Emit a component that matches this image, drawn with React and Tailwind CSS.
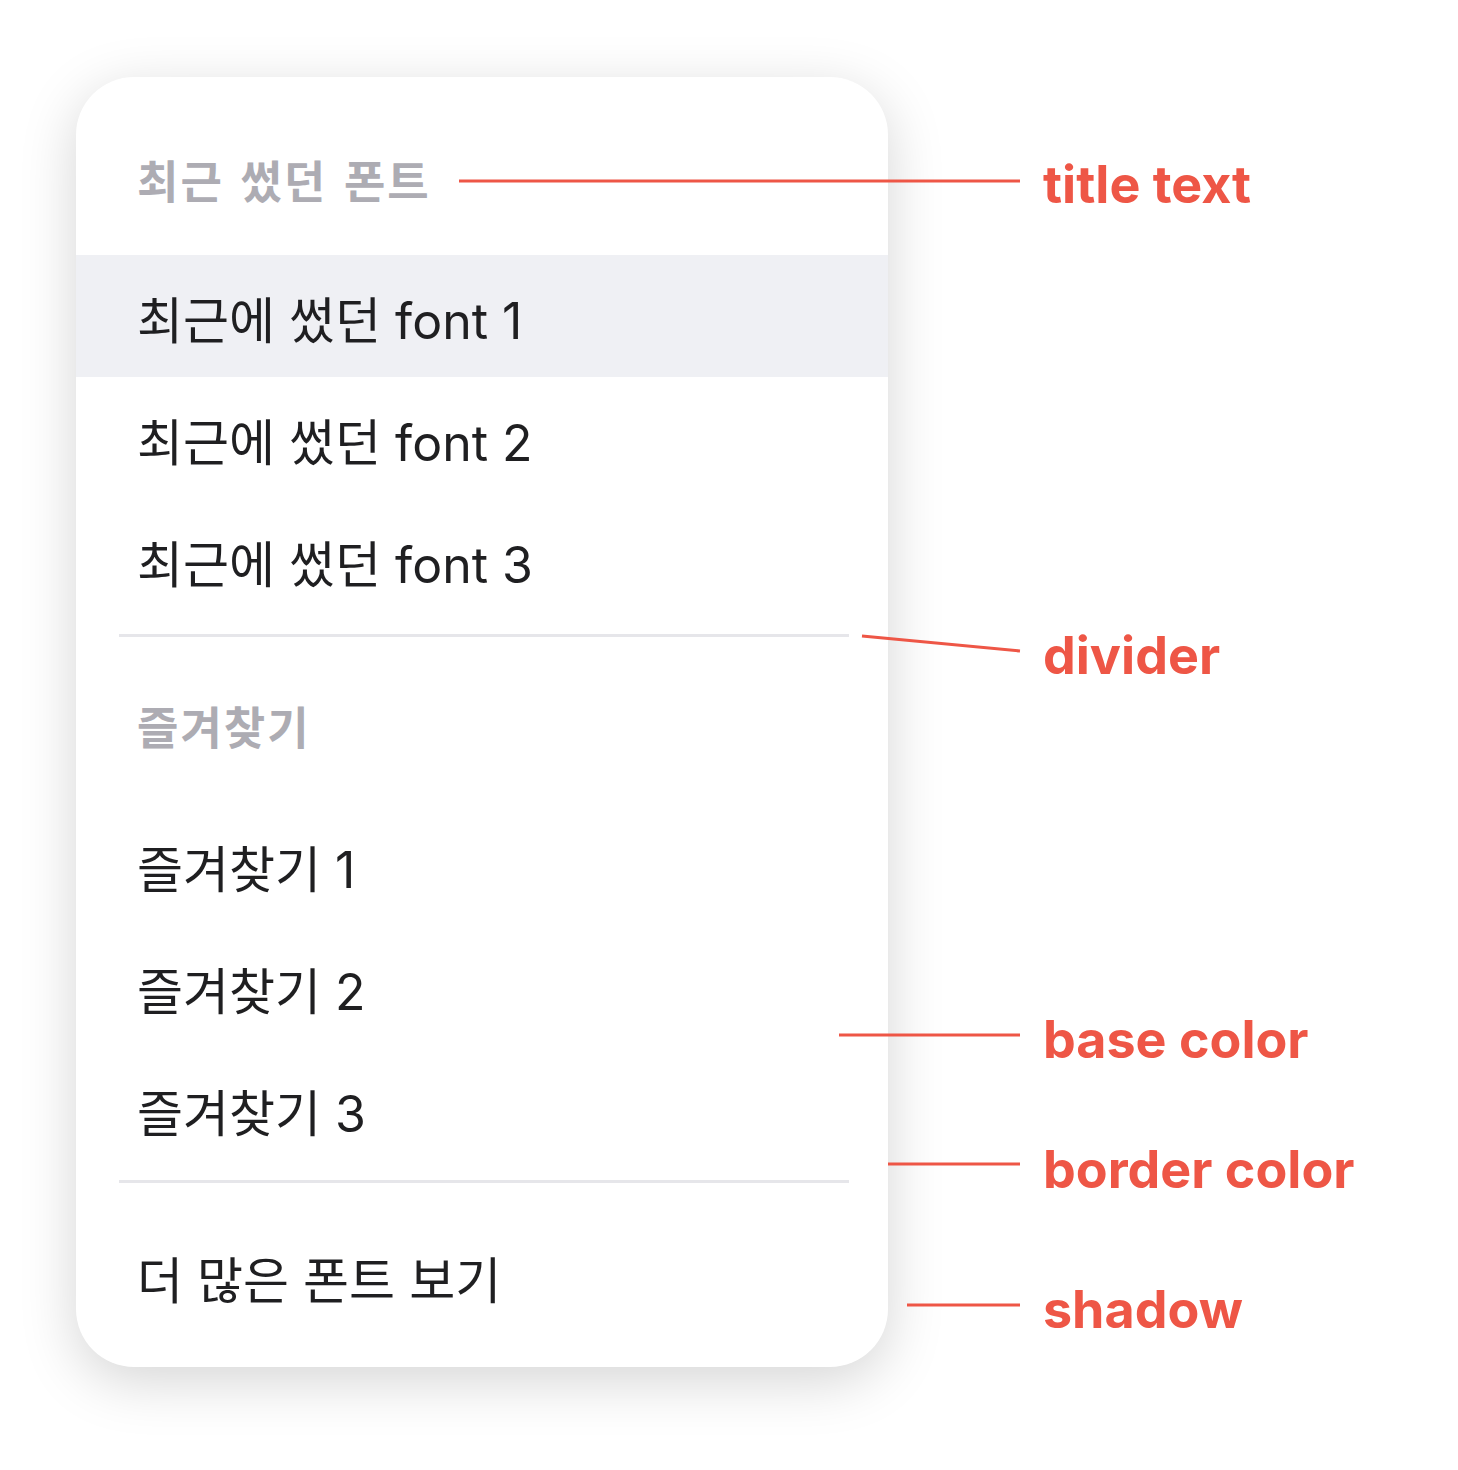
import React from 'react';

const recent = ['최근에 썼던 font 1', '최근에 썼던 font 2', '최근에 썼던 font 3'];
const favorites = ['즐겨찾기 1', '즐겨찾기 2', '즐겨찾기 3'];

const labels = [
  { text: 'title text', top: 'top-[155px]' },
  { text: 'divider', top: 'top-[626px]' },
  { text: 'base color', top: 'top-[1010px]' },
  { text: 'border color', top: 'top-[1140px]' },
  { text: 'shadow', top: 'top-[1280px]' },
];

const Row = ({ label, active }) => (
  <div className={`h-[122px] flex items-center pt-[10px] px-[61px] text-[50px] text-[#1f1f21] ${active ? 'bg-[#eff0f4]' : ''}`}>
    {label}
  </div>
);

const Divider = ({ className }) => (
  <div className={`ml-[43px] mr-[39px] h-[3px] bg-[#e6e6ea] ${className}`} />
);

const App = () => {
  return (
    <div
      className="relative w-[1458px] h-[1470px] bg-white overflow-hidden"
      style={{ fontFamily: '"Inter", "Noto Sans CJK KR", sans-serif' }}
    >
      <div className="pt-[77px] pl-[76px]">
        <div className="w-[812px] h-[1290px] bg-white rounded-[58px] shadow-[0_14px_56px_rgba(0,0,0,0.17)] overflow-hidden">
          <div className="h-[178px] pt-[82px] px-[61px] text-[45px] leading-[48px] font-bold tracking-[2px] [word-spacing:4px] text-[#adacb3]">
            최근 썼던 폰트
          </div>
          {recent.map((r, i) => (
            <Row key={r} label={r} active={i === 0} />
          ))}
          <Divider className="mt-[13px]" />
          <div className="h-[167px] pt-[68px] px-[61px] text-[45px] leading-[48px] font-bold tracking-[2px] text-[#adacb3]">
            즐겨찾기
          </div>
          {favorites.map((f) => (
            <Row key={f} label={f} />
          ))}
          <Divider className="mt-[10px]" />
          <div className="h-[182px] pt-[73px] px-[61px] text-[50px] leading-[50px] text-[#1f1f21]">
            더 많은 폰트 보기
          </div>
        </div>
      </div>

      {/* annotation lines */}
      <svg className="absolute left-0 top-0" width="1458" height="1470">
        <g stroke="#ee5646" strokeWidth="3">
          <line x1="459" y1="181" x2="1020" y2="181" />
          <line x1="862" y1="636" x2="1020" y2="651" />
          <line x1="839" y1="1035" x2="1020" y2="1035" />
          <line x1="888" y1="1164" x2="1020" y2="1164" />
          <line x1="907" y1="1305" x2="1020" y2="1305" />
        </g>
      </svg>

      {labels.map((l) => (
        <div
          key={l.text}
          className={`absolute left-[1043px] ${l.top} text-[52px] leading-[60px] font-bold text-[#ee5646]`}
        >
          {l.text}
        </div>
      ))}
    </div>
  );
};

export default App;
